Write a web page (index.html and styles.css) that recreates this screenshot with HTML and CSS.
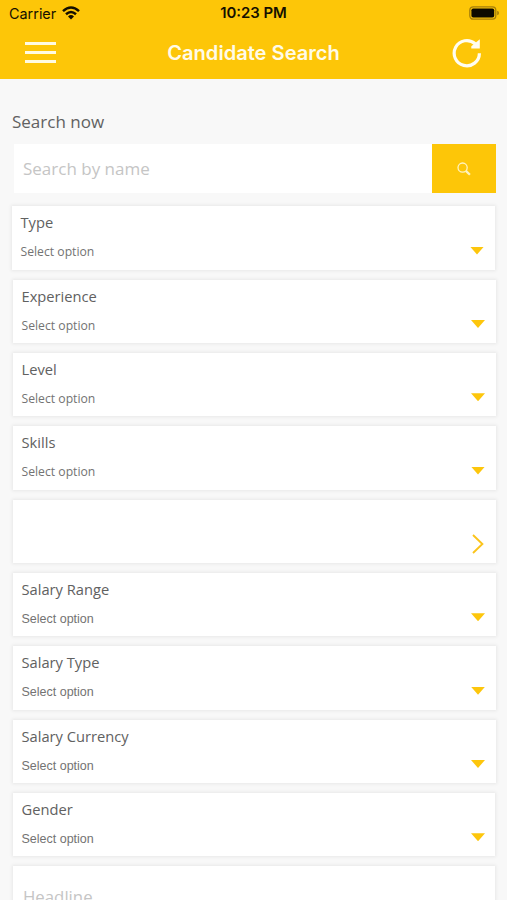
FILE: index.html
```html
<!DOCTYPE html>
<html lang="en">
<head>
<meta charset="utf-8">
<title>Candidate Search</title>
<link rel="stylesheet" href="styles.css">
</head>
<body>
<header class="header">
  <div class="status">
    <div class="carrier"><span>Carrier</span>
      <svg class="wifi" width="18" height="14" viewBox="0 0 18 14"><g fill="none" stroke="#151000" stroke-width="2.5"><path d="M1 5.2Q9-2.2 17 5.2"/><path d="M4 8.3Q9 3.8 14 8.3"/></g><path d="M6 10.4Q9 7.8 12 10.4L9 13.6Z" fill="#151000"/></svg>
    </div>
    <span class="time">10:23 PM</span>
    <svg class="battery" width="31" height="14" viewBox="0 0 31 14"><rect x=".8" y=".8" width="26" height="12.4" rx="3.4" fill="none" stroke="#a57f0a" stroke-width="1.3"/><rect x="2.4" y="2.4" width="22.8" height="9.2" rx="1.8" fill="#0d0a00"/><path d="M28.2 4.8Q30 5.3 30 7T28.2 9.2Z" fill="#a57f0a"/></svg>
  </div>
  <div class="nav">
    <div class="menu"><i></i><i></i><i></i></div>
    <h1 class="title">Candidate Search</h1>
    <svg class="reload" width="30" height="30" viewBox="0 0 30 30"><path d="M27.4 15.2A12.6 12.6 0 1 1 23.2 5.8" fill="none" stroke="#fffdf0" stroke-width="3.2"/><path d="M27.8 1.2V10.4H19.3V8.2Z" fill="#fffdf0"/></svg>
  </div>
</header>
<main class="content">
  <h2 class="heading">Search now</h2>
  <div class="search">
    <div class="field">Search by name</div>
    <div class="go"><svg width="14" height="14" viewBox="0 0 14 14"><circle cx="5.6" cy="5.6" r="4.6" fill="none" stroke="#fff3c0" stroke-width="1.3"/><path d="M8.9 8.9L12.9 12.8" stroke="#fff3c0" stroke-width="2.2"/></svg></div>
  </div>
  <div class="cards">
    <section class="card first"><h3>Type</h3><p>Select option</p><b class="caret"></b></section>
    <section class="card"><h3>Experience</h3><p>Select option</p><b class="caret"></b></section>
    <section class="card"><h3>Level</h3><p>Select option</p><b class="caret"></b></section>
    <section class="card"><h3>Skills</h3><p>Select option</p><b class="caret"></b></section>
    <section class="card"><svg class="chevron" width="12" height="20" viewBox="0 0 12 20"><path d="M1 1L10.4 10L1 19" fill="none" stroke="#fbc41c" stroke-width="1.9"/></svg></section>
    <section class="card alt"><h3>Salary Range</h3><p>Select option</p><b class="caret"></b></section>
    <section class="card alt"><h3>Salary Type</h3><p>Select option</p><b class="caret"></b></section>
    <section class="card alt"><h3>Salary Currency</h3><p>Select option</p><b class="caret"></b></section>
    <section class="card alt narrow"><h3>Gender</h3><p>Select option</p><b class="caret"></b></section>
    <section class="card narrow headline">Headline</section>
  </div>
</main>
</body>
</html>
```
FILE: styles.css
```css
* { box-sizing: border-box; }
html, body { height: 900px; overflow: hidden; }
body { margin: 0; background: #f8f8f8; color: #616161; font-family: "Open Sans", sans-serif; }
h1, h2, h3, p { margin: 0; font-weight: 400; }
svg { display: block; }

.header { height: 79px; background: #fdc608; font-family: Inter, sans-serif; }
.status { height: 27px; display: grid; grid-template-columns: 1fr auto 1fr; align-items: center; padding: 0 7px 0 9px; color: #151000; }
.carrier { display: flex; align-items: center; gap: 6px; font-size: 14.4px; line-height: 27px; }
.wifi { margin-top: -2px; }
.time { font-size: 14.9px; font-weight: 600; line-height: 27px; margin: 0 1px 0 -1px; }
.battery { justify-self: end; margin-top: -1px; }
.nav { height: 52px; display: grid; grid-template-columns: 1fr auto 1fr; align-items: center; padding: 0 25px; }
.menu { width: 31px; display: grid; gap: 6px; margin-top: -1px; }
.menu i { height: 3.2px; background: #fffbe2; }
.title { color: #fffbe8; font-size: 20.1px; font-weight: 600; line-height: 50px; margin-top: -1px; }
.reload { justify-self: end; }

.content { padding: 30px 11px 0 12px; }
.heading { height: 35px; font-size: 17px; line-height: 25px; }
.search { height: 49px; display: flex; margin-left: 2px; }
.field { flex: 1; background: #fff; padding-left: 9px; color: #c5c5c5; font-size: 17px; line-height: 49px; }
.go { width: 64px; background: #fdc608; display: grid; place-items: center; }

.cards { margin: 13.2px 0 0 1px; display: grid; gap: 10px; }
.card { position: relative; height: 63.35px; background: #fff; padding: 6.2px 9px 0 8.5px; box-shadow: 0 0 3px 1px #e8e8e8; }
.card h3 { font-size: 14.7px; line-height: 20px; }
.card p { margin-top: 11px; color: #737373; font-size: 12.2px; line-height: 18px; }
.first { margin: 0 1px 0 -1px; }
.narrow { margin-right: 1px; }
.alt p { font-family: "Liberation Sans", sans-serif; font-size: 12.5px; }
.caret { position: absolute; right: 11px; top: 40.4px; width: 14px; height: 8px; background: #fdc60c; clip-path: polygon(0 0, 100% 0, 50% 100%); }
.narrow .caret { right: 10px; }
.chevron { position: absolute; right: 12px; top: 34.4px; }
.headline { color: #c5c5c5; font-size: 16.8px; line-height: 24px; padding: 19px 0 0 10px; }
```
